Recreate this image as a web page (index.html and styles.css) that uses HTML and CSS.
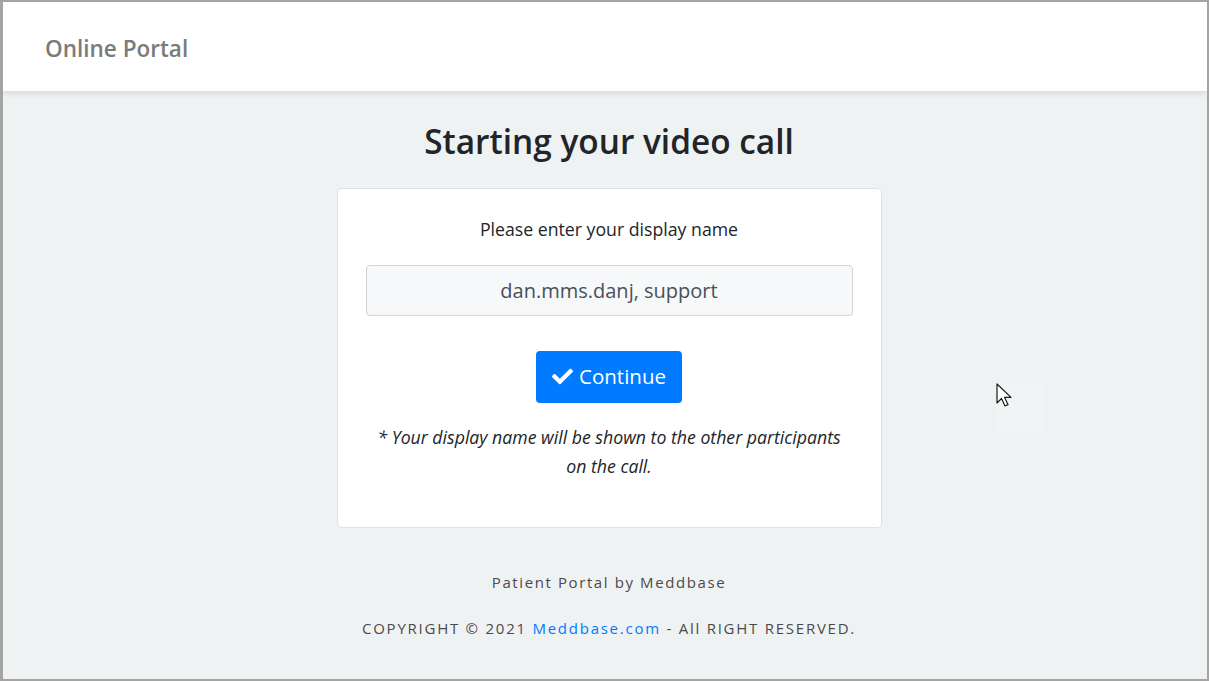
FILE: index.html
```html
<!DOCTYPE html>
<html>
<head>
    <title>Online Portal</title>
    <link rel="stylesheet" href="styles.css">
</head>
<body>
<div class="frame">
    <nav class="navbar">
        <a class="brand" href="#">Online Portal</a>
    </nav>
    <div class="content">
        <h1>Starting your video call</h1>
        <div class="card">
            <p class="prompt">Please enter your display name</p>
            <input class="name-input" type="text" value="dan.mms.danj, support">
            <div class="actions">
                <button class="btn-continue">
                    <svg class="check" viewBox="0 0 512 512" width="21" height="21"><path fill="#fff" d="M173.9 439.4l-166.4-166.4c-10-10-10-26.2 0-36.2l36.2-36.2c10-10 26.2-10 36.2 0L192 312.7 432.1 72.6c10-10 26.2-10 36.2 0l36.2 36.2c10 10 10 26.2 0 36.2L210.1 439.4c-10 10-26.2 10-36.2 0z"/></svg>
                    Continue
                </button>
            </div>
            <p class="note">* Your display name will be shown to the other participants on the call.</p>
        </div>
        <div class="footer">
            <p class="by">Patient Portal by Meddbase</p>
            <p class="copy">COPYRIGHT &copy; 2021 <a href="#">Meddbase.com</a> - All RIGHT RESERVED.</p>
        </div>
    </div>
    <div class="cursor-box"></div>
    <svg class="cursor" width="22" height="28" viewBox="0 0 22 28"><path d="M1 1 L1 20 L5.5 15.5 L9 23 L12 21.6 L8.6 14.4 L15 14.4 Z" fill="#fff" stroke="#1a1a1a" stroke-width="1.2" stroke-linejoin="round"/></svg>
</div>
</body>
</html>
```

FILE: styles.css
```css
/* page */
html, body {
    margin: 0;
    padding: 0;
}

body {
    font-family: "Open Sans", "Noto Sans", sans-serif;
    color: #212529;
}

.frame {
    position: relative;
    height: 681px;
    box-sizing: border-box;
    border: 2px solid #a4a4a4;
    border-left-width: 3px;
    background-color: #eff2f3;
    overflow: hidden;
}

/* navbar */
.navbar {
    height: 89px;
    background-color: #fff;
    box-shadow: 0 2px 6px rgba(0, 0, 0, 0.12);
    display: flex;
    align-items: center;
    padding-left: 42px;
}

.brand {
    font-size: 22.5px;
    font-weight: 600;
    color: #7b7b7b;
    text-decoration: none;
    padding-top: 3px;
}

/* content */
.content {
    display: flex;
    flex-direction: column;
    align-items: center;
    padding-top: 31px;
    padding-left: 8px;
}

h1 {
    margin: 0 0 28px;
    font-size: 33.4px;
    font-weight: 600;
    line-height: 38px;
    color: #212529;
}

.card {
    width: 545px;
    box-sizing: border-box;
    background-color: #fff;
    border: 1px solid #dee2e6;
    border-radius: 5px;
    padding: 27px 28px 46px;
    text-align: center;
}

.prompt {
    margin: 0 0 23px;
    font-size: 17.7px;
    line-height: 26px;
}

.name-input {
    display: block;
    width: 100%;
    box-sizing: border-box;
    height: 51px;
    border: 1px solid #ced4da;
    border-radius: 4px;
    background-color: #f7f8f9;
    font-family: inherit;
    font-size: 20px;
    color: #495057;
    text-align: center;
    padding: 0 12px;
    margin: 0;
}

.actions {
    margin-top: 35px;
}

.btn-continue {
    height: 52px;
    padding: 0 16px 2px;
    background-color: #007bff;
    color: #fff;
    border: none;
    border-radius: 4px;
    font-family: inherit;
    font-size: 20.5px;
    display: inline-flex;
    align-items: center;
    gap: 6px;
    cursor: pointer;
}

.note {
    margin: 20px 0 0;
    font-size: 17.7px;
    font-style: italic;
    line-height: 29px;
}

/* footer */
.footer {
    text-align: center;
    color: #4a4a4a;
    font-size: 15px;
    letter-spacing: 1.6px;
    margin-top: 43px;
}

.footer p {
    margin: 0;
    line-height: 22px;
}

.footer .copy {
    margin-top: 24px;
    letter-spacing: 1.75px;
}

.footer a {
    color: #007bff;
    text-decoration: none;
}

/* mouse pointer over the page */
.cursor-box {
    position: absolute;
    left: 993px;
    top: 382px;
    width: 48px;
    height: 48px;
    background-color: #f1f4f5;
}

.cursor {
    position: absolute;
    left: 993px;
    top: 381px;
}
```
